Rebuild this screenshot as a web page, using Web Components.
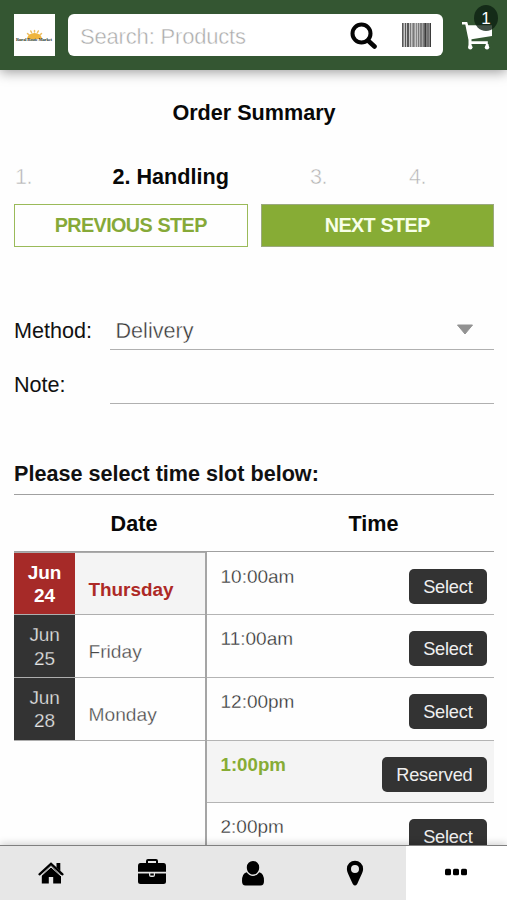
<!DOCTYPE html>
<html lang="en">
<head>
<meta charset="utf-8">
<title>Order Summary</title>
<style>
html,body{margin:0;height:100%;background:#fefefe}
body{font-family:"Liberation Sans",Arial,sans-serif;font-size:21.6px;color:#111;overflow:hidden}
</style>
</head>
<body>
<order-app></order-app>
<script>
const define = (name, html) => customElements.define(name, class extends HTMLElement {
  constructor() {
    super();
    const t = document.createElement('template');
    t.innerHTML = html;
    this.attachShadow({mode: 'open'}).append(t.content.cloneNode(true));
  }
});

define('store-logo', `<style>:host{display:block;width:41px;height:42px;background:#fff}svg{display:block;overflow:visible}</style>
<svg width="41" height="42" viewBox="0 0 41 42">
<g stroke="#ecbd62" stroke-width="1.5" stroke-linecap="round"><path d="M15 21l-1.500-1.500M17.500 18.500l-.7-1.500M20.500 18v-1.500M23.500 18.500l.8-1.500M26 21l1.500-1.500"/></g>
<path d="M13 25a7.500 6 0 0 1 15 0z" fill="#efb53f"/>
<text x="2" y="26.600" font-family="Liberation Serif,serif" font-size="4.500" font-weight="bold" fill="#2d342c" textLength="36" lengthAdjust="spacing">Rural Route Market</text>
</svg>`);

define('search-box', `<style>
:host{display:flex;box-sizing:border-box;flex:0 0 375px;height:42px;background:#fff;border-radius:6px;align-items:center;padding:0 12px 0 12px}
span{flex:1;font-size:22px;letter-spacing:-.18px;color:#ababab;-webkit-text-stroke:.45px #fff;line-height:42px;padding-top:3px}
.s{margin-right:25px}svg{display:block;flex:none}</style>
<span>Search: Products</span>
<svg class="s" width="27" height="28" viewBox="0 0 27 28"><g fill="none" stroke="#050505"><circle cx="11.500" cy="12.500" r="9" stroke-width="4"/><path d="M18 19.500l6.500 6" stroke-width="4.600" stroke-linecap="round"/></g></svg>
<svg width="30" height="24" viewBox="0 0 30 24" style="margin-right:-1px;margin-top:-1px">
<g fill="#3c3c3c"><path opacity=".8" d="M0 0h1.500v24H0zM3 0h1v24H3zM5 0h2v24H5z"/><path opacity=".55" d="M8 0h1v24H8zM10.500 0h2v24h-2zM14 0h.8v24H14zM16 0h1.200v24H16z"/><path opacity=".75" d="M18.300 0h1.400v24h-1.400zM20.700 0h1v24h-1z"/><path d="M22.300 0h2.200v24h-2.200zM25.400 0h1.200v24h-1.200zM27.600 0h1.400v24h-1.400z"/><path opacity=".3" d="M0 0h29v24H0z"/></g></svg>`);

define('cart-button', `<style>:host{display:block;position:relative;width:40px;height:42px}
svg{display:block;margin:8px 0 0 2px;overflow:visible}
b{position:absolute;left:14px;top:-9px;width:24px;height:26px;border-radius:50%;background:rgba(12,31,17,.78);color:#fff;font-size:17px;font-weight:400;line-height:27px;text-align:center}</style>
<svg width="32" height="30" viewBox="0 0 32 30"><path d="M0 0H5.200L6.200 3.200H30V14L9.500 17.200V19.200H25.800V22H9.500V25H6.500V18L3.300 2.600H0ZM23.800 22H26.500V25H23.800Z" fill="#fff"/><circle cx="8.300" cy="25.300" r="2.200" fill="#fff"/><circle cx="25" cy="25.300" r="2.200" fill="#fff"/></svg><b>1</b>`);

define('app-header', `<style>:host{display:flex;flex:none;box-sizing:border-box;height:70px;padding:14px 0 0 14px;background:#345632;box-shadow:0 2px 12px rgba(0,0,0,.4);z-index:1}
store-logo{margin-right:13px}cart-button{margin-left:17px}</style>
<store-logo></store-logo><search-box></search-box><cart-button></cart-button>`);

define('step-list', `<style>:host{display:grid;grid-template-columns:98.500px 196.500px 99px 1fr;height:40px;line-height:40px;color:#b4b4b4}
span{padding-left:1px;letter-spacing:-.6px;-webkit-text-stroke:.5px #fefefe}b{color:#080808}</style>
<span>1.</span><b>2. Handling</b><span>3.</span><span>4.</span>`);

define('step-button', `<style>:host{display:block;box-sizing:border-box;height:43px;border:1.500px solid #9aba59;color:#86a938;font-size:19.800px;font-weight:700;line-height:39px;text-align:center;padding-top:1px;letter-spacing:-.62px;word-spacing:.6px}
:host([primary]){background:#87ac35;color:#f7ffe8;border:1px solid #9ba97e;line-height:39px}</style><slot></slot>`);

define('form-row', `<style>:host{display:flex;height:54.300px;align-items:flex-start}
label{flex:0 0 96px;line-height:38px}
div{flex:1;display:flex;justify-content:space-between;height:37px;line-height:37px;box-sizing:content-box;border-bottom:1.500px solid #b0b0b0;padding-left:5.500px;color:#333;-webkit-text-stroke:.4px #fefefe}
svg{margin:12px 20px 0 0}svg{display:none}:host([select]) svg{display:block}</style>
<label><slot name="label"></slot></label><div><span><slot></slot></span><svg width="18" height="12" viewBox="0 0 18 12"><path d="M1.500 1H16.500L9 10Z" fill="#929292" stroke="#929292" stroke-linejoin="round"/></svg></div>`);

define('date-row', `<style>:host{display:flex;box-sizing:border-box;height:62.600px;border-bottom:1.500px solid #aeaeae;font-size:19.200px;color:#484848}
.d{flex:0 0 61px;box-sizing:border-box;background:#333;color:#e4e4e4;text-align:center;font-size:19px;letter-spacing:-.15px;line-height:23.500px;padding:8px 7px 0;-webkit-text-stroke:.25px #333}
.n{flex:1;line-height:73px;padding-left:13.500px;-webkit-text-stroke:.3px #fefefe}
:host([on]){font-weight:700;color:#ad2926;font-size:18.900px}:host([on]) .d{background:#a62a28;color:#fff}:host([on]) .d,:host([on]) .n{-webkit-text-stroke:0}:host([on]) .n{background:#f4f4f4}</style>
<div class="d"><slot name="date"></slot></div><div class="n"><slot></slot></div>`);

define('time-row', `<style>:host{display:flex;box-sizing:border-box;height:62.600px;border-bottom:1.500px solid #b4b4b4;font-size:19px;color:#303030;justify-content:space-between;padding:0 7px 0 13.500px}
span{line-height:48px;-webkit-text-stroke:.3px #fefefe}
button{font:18.200px/34px "Liberation Sans",Arial,sans-serif;letter-spacing:-.2px;height:35px;margin:16px 0 0;border:0;border-radius:5px;background:#333;color:#efefef;padding:1px 14.500px 0}
:host([on]){background:#f4f4f4}:host([on]) span{font-weight:700;color:#87ac35;-webkit-text-stroke:0;font-size:18.700px}</style>
<span><slot></slot></span><button><slot name="action"></slot></button>`);

define('slot-table', `<style>:host{display:block}
h2{margin:0;font-size:21.600px;line-height:40px;height:40px;border-bottom:1.500px solid #a0a0a0}
.h{display:grid;grid-template-columns:240px 239px;height:56.300px;line-height:58px;font-weight:700;text-align:center;border-bottom:1.500px solid #a0a0a0;box-sizing:border-box;color:#080808}
.b{display:grid;grid-template-columns:191px 289px}.l{padding-top:1.100px}
.r{border-left:2px solid #a5a5a5;padding-top:1.100px}.l{box-shadow:inset 0 1px #ababab}</style>
<h2>Please select time slot below:</h2>
<div class="h"><span>Date</span><span>Time</span></div>
<div class="b"><div class="l">
<date-row on><span slot="date">Jun 24</span>Thursday</date-row>
<date-row><span slot="date">Jun 25</span>Friday</date-row>
<date-row><span slot="date">Jun 28</span>Monday</date-row></div>
<div class="r">
<time-row>10:00am<span slot="action">Select</span></time-row>
<time-row>11:00am<span slot="action">Select</span></time-row>
<time-row>12:00pm<span slot="action">Select</span></time-row>
<time-row on>1:00pm<span slot="action">Reserved</span></time-row>
<time-row>2:00pm<span slot="action">Select</span></time-row></div></div>`);

define('tab-bar', `<style>:host{display:grid;grid-template-columns:repeat(5,1fr);flex:none;box-sizing:border-box;height:55px;background:#e7e7e7;border-top:1.500px solid #808080;box-shadow:0 -1px 8px rgba(0,0,0,.2);z-index:1}
div{display:flex;justify-content:center;align-items:center}svg{display:block;fill:#000}.on{background:#fff}</style>
<div><svg width="28" height="28" viewBox="0 0 28 28"><path d="M14 7.300L24 16V24.500H16.200V18H11.800V24.500H4.800V16Z"/><path d="M2.500 15.300L14 4.900L25.500 15.300" fill="none" stroke="#000" stroke-width="2.300" stroke-linecap="round"/><path d="M4 17L14 8L24 17" fill="none" stroke="#e7e7e7" stroke-width="1"/><path d="M19.500 4h3.800v8l-3.800-3.400z"/></svg></div>
<div><svg width="30" height="28" viewBox="0 0 30 28" style="margin-top:-2px"><path d="M1 13V8Q1 5 3.500 5H9V3Q9 1 11 1H19Q21 1 21 3V5H26.500Q29 5 29 8V13.700H1ZM11 5H19V3H11ZM1 15.500H12V17Q12 19 14 19H16Q18 19 18 17V15.500H29V23.500Q29 26 26.500 26H3.500Q1 26 1 23.500Z" fill-rule="evenodd"/><rect x="13.300" y="15.500" width="3.500" height="2"/></svg></div>
<div><svg width="26" height="28" viewBox="0 0 26 28"><path d="M13 2A6.200 6.200 0 0 1 19.200 8.200C19.200 12.500 16.500 15.500 13 15.500S6.800 12.500 6.800 8.200A6.200 6.200 0 0 1 13 2ZM6.600 13.200Q9.200 16.900 13 16.900T19.400 13.200Q24 14.200 24 22Q24 26.500 20.500 26.500H5.500Q2 26.500 2 22Q2 14.200 6.600 13.200Z"/></svg></div>
<div><svg width="20" height="28" viewBox="0 0 20 28"><path fill-rule="evenodd" d="M10 1.700A8.100 8.100 0 0 1 18.100 9.800C18.100 13 16.500 15.600 12.200 24.900Q10 28.300 7.800 24.900C3.500 15.600 1.900 13 1.900 9.800A8.100 8.100 0 0 1 10 1.700ZM10 5.900A4 4 0 1 0 10 13.900A4 4 0 1 0 10 5.900Z"/></svg></div>
<div class="on"><svg width="24" height="8" viewBox="0 0 24 8" style="margin-top:-2px"><rect x="1" y=".7" width="6" height="6.600" rx="1.500"/><rect x="9" y=".7" width="6" height="6.600" rx="1.500"/><rect x="17" y=".7" width="6" height="6.600" rx="1.500"/></svg></div>`);

define('order-app', `<style>:host{display:flex;flex-direction:column;width:507px;height:900px;overflow:hidden}
main{flex:1;min-height:0;overflow:hidden;padding:23px 13px 0 14px}
h1{margin:0 0 24px;font-size:21.600px;line-height:40px;text-align:center;color:#080808}
.b{display:grid;grid-template-columns:1fr 1fr;gap:13px;margin:7px 0 65px}
slot-table{margin-top:33.800px}</style>
<app-header></app-header>
<main><h1>Order Summary</h1><step-list></step-list>
<div class="b"><step-button>PREVIOUS STEP</step-button><step-button primary>NEXT STEP</step-button></div>
<form-row select><span slot="label">Method:</span>Delivery</form-row>
<form-row><span slot="label">Note:</span></form-row>
<slot-table></slot-table></main>
<tab-bar></tab-bar>`);
</script>
</body>
</html>
